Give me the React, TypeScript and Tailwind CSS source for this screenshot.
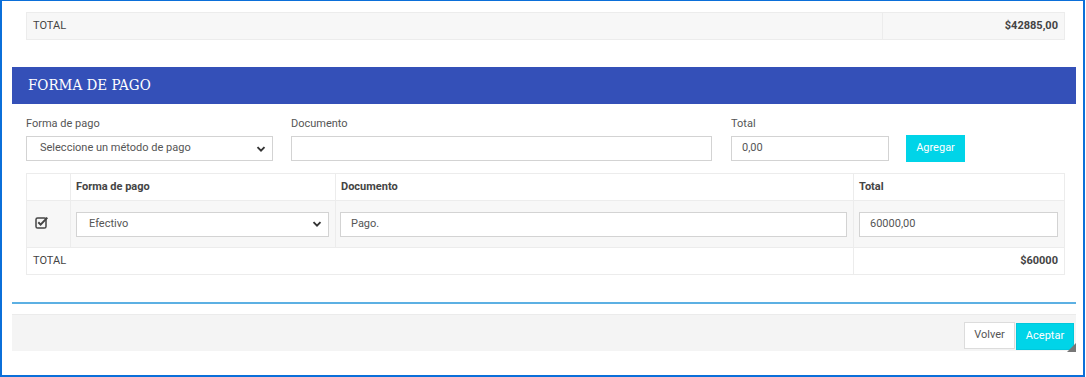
import React from 'react';

const Chevron = () => (
  <svg width="10" height="10" viewBox="0 0 10 10" className="text-[#333]">
    <path d="M1.5 3.2 L5 6.7 L8.5 3.2" fill="none" stroke="currentColor" strokeWidth="1.9" />
  </svg>
);

const CheckSquare = () => (
  <svg width="14" height="13" viewBox="0 0 14 13" className="text-[#444]">
    <rect x="1" y="2" width="10" height="10" rx="1.6" fill="none" stroke="currentColor" strokeWidth="1.5" />
    <path d="M3.3 6.3 L5.6 8.6 L12.3 1.6" fill="none" stroke="currentColor" strokeWidth="2" />
  </svg>
);

function SelectBox({ value, width, pl }: { value: string; width: string; pl: string }) {
  return (
    <div className={`${width} h-[25px] flex items-center justify-between border border-[#d3d3d3] bg-white ${pl} pr-[6px]`}>
      <span className="text-[11px] text-[#555]">{value}</span>
      <Chevron />
    </div>
  );
}

function Input({ value, width }: { value?: string; width: string }) {
  return (
    <div className={`${width} h-[25px] flex items-center border border-[#d3d3d3] bg-white pl-[10px]`}>
      <span className="text-[11px] text-[#555]">{value}</span>
    </div>
  );
}

export default function App() {
  return (
    <div
      className="w-[1085px] h-[377px] bg-white border-t border-l-2 border-r-2 border-b-2 border-[#0b6fd9] overflow-hidden"
      style={{ fontFamily: 'Roboto, "Liberation Sans", sans-serif' }}
    >
      <div className="pl-[10px] pt-[11px]">
        {/* resumen superior */}
        <div className="ml-[14px] w-[1039px] h-[28px] flex border border-[#ececec] bg-[#f7f7f7] text-[11px] text-[#444]">
          <div className="flex-1 flex items-center pl-[6px]">TOTAL</div>
          <div className="w-[182px] flex items-center justify-end pr-[6px] border-l border-[#ececec] font-bold">
            $42885,00
          </div>
        </div>

        {/* panel */}
        <div className="mt-[27px] w-[1064px] h-[37px] bg-[#3450b8] flex items-center pl-[16px]">
          <span
            className="text-white text-[15px]"
            style={{ fontFamily: '"DejaVu Serif Condensed", "DejaVu Serif", serif', fontStretch: 'condensed' }}
          >
            FORMA DE PAGO
          </span>
        </div>

        <div className="pl-[14px] pt-[13px]">
          <div className="flex items-end">
            <div className="w-[247px]">
              <div className="h-[14px] mb-[5px] text-[11px] leading-[14px] text-[#555]">Forma de pago</div>
              <SelectBox value="Seleccione un método de pago" width="w-[247px]" pl="pl-[13px]" />
            </div>
            <div className="ml-[18px] w-[421px]">
              <div className="h-[14px] mb-[5px] text-[11px] leading-[14px] text-[#555]">Documento</div>
              <Input width="w-[421px]" />
            </div>
            <div className="ml-[19px] w-[158px]">
              <div className="h-[14px] mb-[5px] text-[11px] leading-[14px] text-[#555]">Total</div>
              <Input value="0,00" width="w-[158px]" />
            </div>
            <button className="ml-[17px] mb-[-1px] w-[59px] h-[27px] bg-[#00d4e8] text-white text-[11px]">
              Agregar
            </button>
          </div>

          <table className="mt-[12px] w-[1039px] border-collapse text-[11px] text-[#444]">
            <thead>
              <tr className="h-[27px]">
                <th className="w-[44px] border border-[#ececec]"></th>
                <th className="w-[265px] border border-[#ececec] text-left pl-[5px] font-bold">Forma de pago</th>
                <th className="w-[518px] border border-[#ececec] text-left pl-[5px] font-bold">Documento</th>
                <th className="border border-[#ececec] text-left pl-[5px] font-bold">Total</th>
              </tr>
            </thead>
            <tbody>
              <tr className="h-[47px] bg-[#f7f7f7]">
                <td className="border border-[#ececec] pl-[8px] pb-[4px]">
                  <CheckSquare />
                </td>
                <td className="border border-[#ececec] pl-[5px]">
                  <SelectBox value="Efectivo" width="w-[253px]" pl="pl-[12px]" />
                </td>
                <td className="border border-[#ececec] pl-[4px]">
                  <Input value="Pago." width="w-[507px]" />
                </td>
                <td className="border border-[#ececec] pl-[5px]">
                  <Input value="60000,00" width="w-[199px]" />
                </td>
              </tr>
              <tr className="h-[27px]">
                <td colSpan={3} className="border border-[#ececec] pl-[6px]">TOTAL</td>
                <td className="border border-[#ececec] text-right pr-[6px] font-bold">$60000</td>
              </tr>
            </tbody>
          </table>
        </div>

        <div className="mt-[27px] w-[1064px] h-[2px] bg-[#5cb0e3]"></div>

        <div className="mt-[10px] w-[1064px] h-[37px] bg-[#f4f4f4] border-t border-[#ebebeb] flex justify-end items-start pt-[7px] pr-[2px]">
          <button className="w-[51px] h-[27px] bg-white border border-[#dcdcdc] text-[11px] text-[#555]">Volver</button>
          <div className="relative ml-[1px]">
            <button className="w-[58px] h-[27px] bg-[#00d4e8] border border-[#00c8dc] text-white text-[11px]">Aceptar</button>
            <div className="absolute right-[-2px] bottom-[-2px] w-0 h-0 border-l-[9px] border-l-transparent border-b-[9px] border-b-[#777]"></div>
          </div>
        </div>
      </div>
    </div>
  );
}
